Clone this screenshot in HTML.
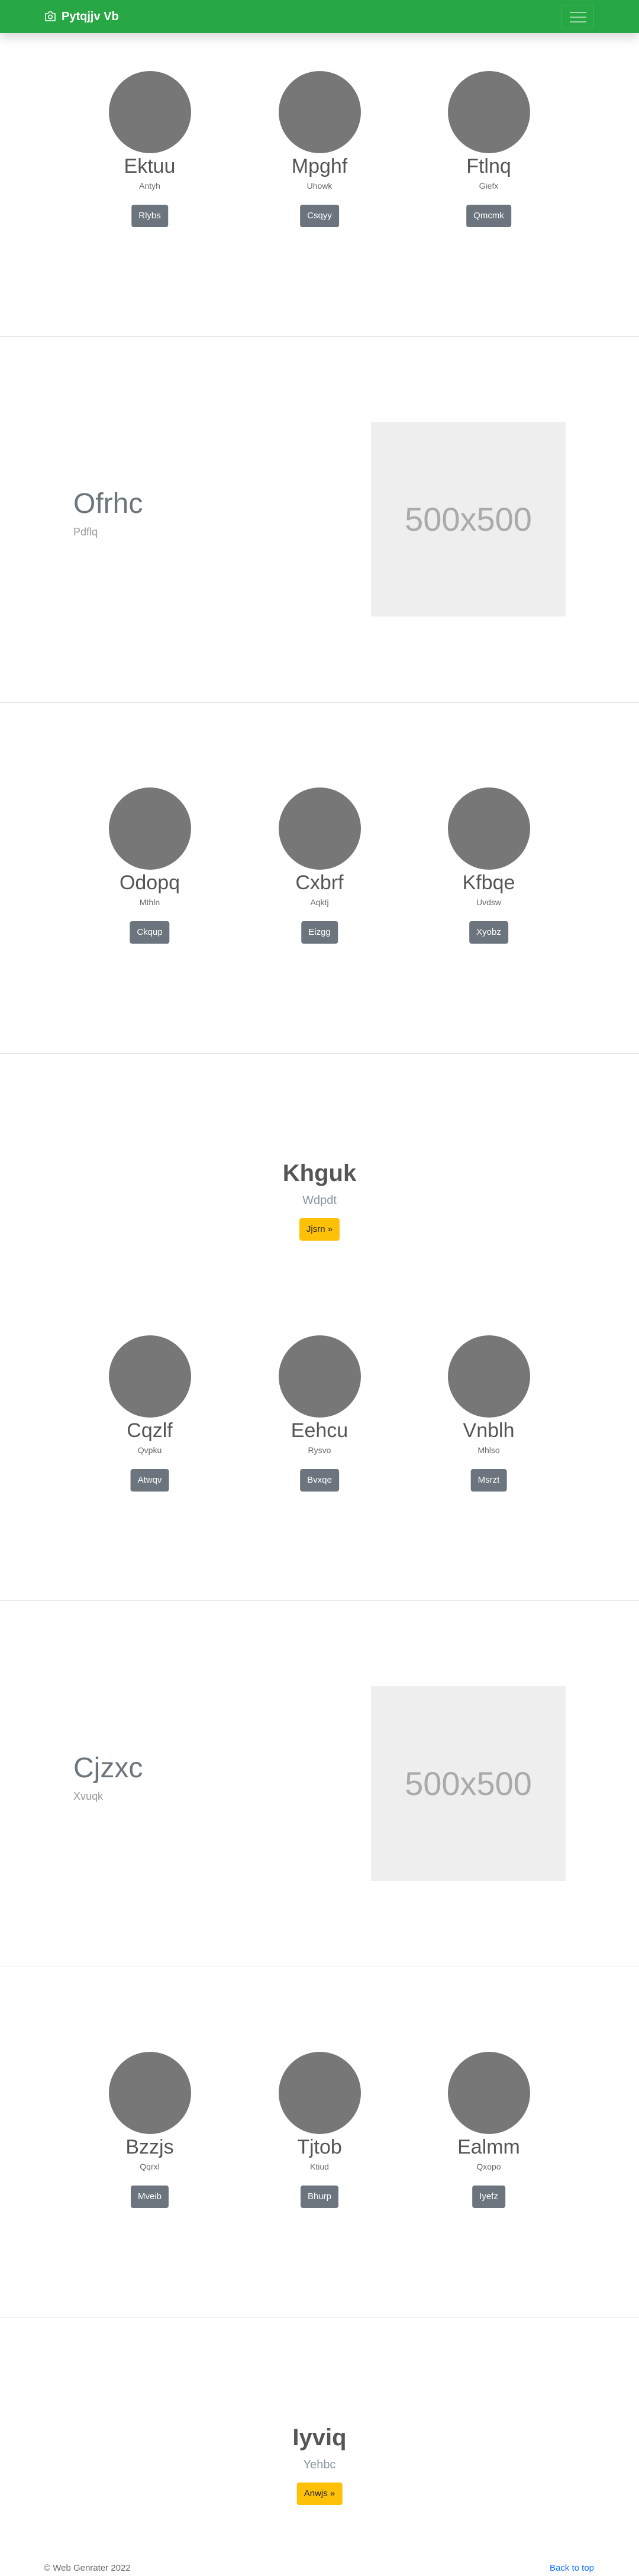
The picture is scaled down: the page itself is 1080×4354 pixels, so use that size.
<!DOCTYPE html>
<html><head><meta charset="utf-8"><style>
*{margin:0;padding:0;box-sizing:border-box}
body{width:1080px;height:4354px;position:relative;background:#fff;font-family:"Liberation Sans",sans-serif;overflow:hidden}
.nav{position:absolute;left:0;top:0;width:1080px;height:56px;background:#28a745;box-shadow:0 8px 16px rgba(0,0,0,.15);z-index:2}
.brand{position:absolute;left:104px;top:16px;color:#fff;font-weight:bold;font-size:20px;line-height:24px}
.tog{position:absolute;left:949px;top:8px;width:55px;height:40px;border:1px solid rgba(255,255,255,.12);border-radius:4px}
.tog i{position:absolute;left:13px;width:28px;height:2px;background:rgba(255,255,255,.55)}
.hr{position:absolute;left:0;width:1080px;height:1px;background:#e3e3e3}
.c{position:absolute;width:139px;height:139px;border-radius:50%;background:#777}
.t{position:absolute;width:280px;text-align:center;font-size:34px;line-height:40px;color:#555}
.s{position:absolute;width:280px;text-align:center;font-size:14px;line-height:20px;color:#666}
.b{position:absolute;height:38px;line-height:38px;padding:0 12px;background:#6c757d;color:#fff;font-size:15px;border-radius:4px;transform:translateX(-50%)}
.img{position:absolute;left:627px;width:329px;height:329px;background:#eee;color:#aaa;font-size:56px;text-align:center}
.ht{position:absolute;left:124px;font-size:48px;line-height:56px;color:#6c757d}
.hs{position:absolute;left:124px;font-size:18px;line-height:24px;color:#999;font-weight:300}
.ct{position:absolute;left:0;width:1080px;text-align:center;font-size:40px;line-height:48px;color:#555;font-weight:bold}
.cs{position:absolute;left:0;width:1080px;text-align:center;font-size:20px;line-height:24px;color:#8a949c}
.yb{position:absolute;height:38px;line-height:38px;padding:0 12px;background:#ffc107;color:#222;font-size:15px;border-radius:4px;left:540px;transform:translateX(-50%)}
.f{position:absolute;top:4331px;font-size:15px;line-height:20px}
</style></head><body>
<div class="nav">
<svg style="position:absolute;left:75px;top:19px" width="20" height="17" viewBox="0 0 20 17" fill="none" stroke="#fff" stroke-width="1.6"><path d="M2 4h4l2-3h4l2 3h4v12H2z"/><circle cx="10" cy="9.5" r="3.2"/></svg>
<div class="brand">Pytqjjv Vb</div>
<div class="tog"><i style="top:11px"></i><i style="top:19px"></i><i style="top:27px"></i></div>
</div>

<!-- section 1 -->
<div class="c" style="left:184px;top:120px"></div><div class="c" style="left:471px;top:120px"></div><div class="c" style="left:757px;top:120px"></div>
<div class="t" style="left:113px;top:261px">Ektuu</div><div class="t" style="left:400px;top:261px">Mpghf</div><div class="t" style="left:686px;top:261px">Ftlnq</div>
<div class="s" style="left:113px;top:304px">Antyh</div><div class="s" style="left:400px;top:304px">Uhowk</div><div class="s" style="left:686px;top:304px">Giefx</div>
<div class="b" style="left:253px;top:346px">Rlybs</div><div class="b" style="left:540px;top:346px">Csqyy</div><div class="b" style="left:826px;top:346px">Qmcmk</div>
<div class="hr" style="top:568px"></div>

<!-- section 2 -->
<div class="img" style="top:713px;line-height:329px">500x500</div>
<div class="ht" style="top:824px">Ofrhc</div>
<div class="hs" style="top:887px">Pdflq</div>
<div class="hr" style="top:1187px"></div>

<!-- section 3 -->
<div class="c" style="left:184px;top:1331px"></div><div class="c" style="left:471px;top:1331px"></div><div class="c" style="left:757px;top:1331px"></div>
<div class="t" style="left:113px;top:1472px">Odopq</div><div class="t" style="left:400px;top:1472px">Cxbrf</div><div class="t" style="left:686px;top:1472px">Kfbqe</div>
<div class="s" style="left:113px;top:1515px">Mthln</div><div class="s" style="left:400px;top:1515px">Aqktj</div><div class="s" style="left:686px;top:1515px">Uvdsw</div>
<div class="b" style="left:253px;top:1557px">Ckqup</div><div class="b" style="left:540px;top:1557px">Eizgg</div><div class="b" style="left:826px;top:1557px">Xyobz</div>
<div class="hr" style="top:1780px"></div>

<!-- section 4 -->
<div class="ct" style="top:1959px">Khguk</div>
<div class="cs" style="top:2017px">Wdpdt</div>
<div class="yb" style="top:2059px">Jjsrn »</div>
<div class="c" style="left:184px;top:2257px"></div><div class="c" style="left:471px;top:2257px"></div><div class="c" style="left:757px;top:2257px"></div>
<div class="t" style="left:113px;top:2398px">Cqzlf</div><div class="t" style="left:400px;top:2398px">Eehcu</div><div class="t" style="left:686px;top:2398px">Vnblh</div>
<div class="s" style="left:113px;top:2441px">Qvpku</div><div class="s" style="left:400px;top:2441px">Rysvo</div><div class="s" style="left:686px;top:2441px">Mhlso</div>
<div class="b" style="left:253px;top:2483px">Atwqv</div><div class="b" style="left:540px;top:2483px">Bvxqe</div><div class="b" style="left:826px;top:2483px">Msrzt</div>
<div class="hr" style="top:2705px"></div>

<!-- section 6 -->
<div class="img" style="top:2850px;line-height:329px">500x500</div>
<div class="ht" style="top:2961px">Cjzxc</div>
<div class="hs" style="top:3024px">Xvuqk</div>
<div class="hr" style="top:3324px"></div>

<!-- section 7 -->
<div class="c" style="left:184px;top:3468px"></div><div class="c" style="left:471px;top:3468px"></div><div class="c" style="left:757px;top:3468px"></div>
<div class="t" style="left:113px;top:3609px">Bzzjs</div><div class="t" style="left:400px;top:3609px">Tjtob</div><div class="t" style="left:686px;top:3609px">Ealmm</div>
<div class="s" style="left:113px;top:3652px">Qqrxl</div><div class="s" style="left:400px;top:3652px">Ktiud</div><div class="s" style="left:686px;top:3652px">Qxopo</div>
<div class="b" style="left:253px;top:3694px">Mveib</div><div class="b" style="left:540px;top:3694px">Bhurp</div><div class="b" style="left:826px;top:3694px">Iyefz</div>
<div class="hr" style="top:3917px"></div>

<!-- section 8 -->
<div class="ct" style="top:4096px">Iyviq</div>
<div class="cs" style="top:4154px">Yehbc</div>
<div class="yb" style="top:4196px">Anwjs »</div>

<div class="f" style="left:74px;color:#666">© Web Genrater 2022</div>
<div class="f" style="right:76px;color:#0d6efd">Back to top</div>
</body></html>
